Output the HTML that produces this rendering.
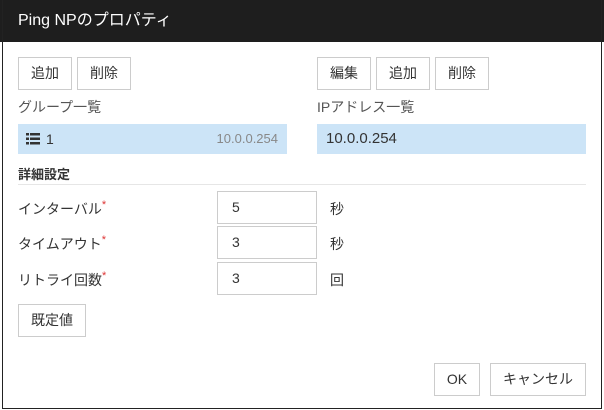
<!DOCTYPE html>
<html><head><meta charset="utf-8"><style>
*{box-sizing:border-box;margin:0;padding:0}
body{width:604px;height:410px;background:#fff;font-family:"Liberation Sans","Noto Sans CJK JP",sans-serif;color:#333;position:relative;overflow:hidden}
.frame{position:absolute;left:2px;top:0;width:600px;height:409px;border:1px solid #222;border-top:none}
.title{position:absolute;left:0;top:0;width:604px;height:42px;background:#1e1e1e;color:#fff;font-size:16px;line-height:42px;padding-left:18px}
.btn{position:absolute;border:1px solid #ccc;background:#fff;font-size:14px;color:#333;text-align:center;height:33px;line-height:31px}
.lbl{position:absolute;font-size:14px;color:#555}
.row{position:absolute;background:#cce4f7;height:30px;font-size:14px;line-height:30px}
.inp{position:absolute;left:217px;width:100px;height:33px;border:1px solid #ccc;font-size:14px;line-height:31px;padding-left:14px}
.unit{position:absolute;left:330px;font-size:14px}
.req{color:#d33;font-size:11px;vertical-align:top}
</style></head><body>
<div class="title">Ping NPのプロパティ</div>
<div class="frame"></div>
<div class="btn" style="left:18px;top:57px;width:54px">追加</div>
<div class="btn" style="left:77px;top:57px;width:54px">削除</div>
<div class="btn" style="left:317px;top:57px;width:54px">編集</div>
<div class="btn" style="left:376px;top:57px;width:54px">追加</div>
<div class="btn" style="left:435px;top:57px;width:54px">削除</div>
<div class="lbl" style="left:18px;top:97px">グループ一覧</div>
<div class="lbl" style="left:317px;top:97px">IPアドレス一覧</div>
<div class="row" style="left:18px;top:124px;width:269px">
<svg style="position:absolute;left:8px;top:9px" width="14" height="12" viewBox="0 0 14 12"><g fill="#333"><rect x="0" y="0" width="3" height="2.5"/><rect x="4" y="0" width="10" height="2.5"/><rect x="0" y="4.5" width="3" height="2.5"/><rect x="4" y="4.5" width="10" height="2.5"/><rect x="0" y="9" width="3" height="2.5"/><rect x="4" y="9" width="10" height="2.5"/></g></svg>
<span style="position:absolute;left:28px">1</span>
<span style="position:absolute;right:9px;font-size:13px;color:#888">10.0.0.254</span></div>
<div class="row" style="left:317px;top:124px;width:269px;padding-left:9px;font-size:15px">10.0.0.254</div>
<div class="lbl" style="left:18px;top:164px;color:#333;font-weight:bold;font-size:13px">詳細設定</div>
<div style="position:absolute;left:18px;top:184px;width:568px;height:1px;background:#e6e6e6"></div>
<div class="lbl" style="left:18px;top:199px;color:#333">インターバル<span class="req">*</span></div>
<div class="lbl" style="left:18px;top:234px;color:#333">タイムアウト<span class="req">*</span></div>
<div class="lbl" style="left:18px;top:270px;color:#333">リトライ回数<span class="req">*</span></div>
<div class="inp" style="top:191px">5</div>
<div class="inp" style="top:226px">3</div>
<div class="inp" style="top:262px">3</div>
<div class="unit" style="top:199px">秒</div>
<div class="unit" style="top:234px">秒</div>
<div class="unit" style="top:270px">回</div>
<div class="btn" style="left:18px;top:304px;width:68px">既定値</div>
<div class="btn" style="left:434px;top:363px;width:46px">OK</div>
<div class="btn" style="left:490px;top:363px;width:96px">キャンセル</div>
</body></html>
